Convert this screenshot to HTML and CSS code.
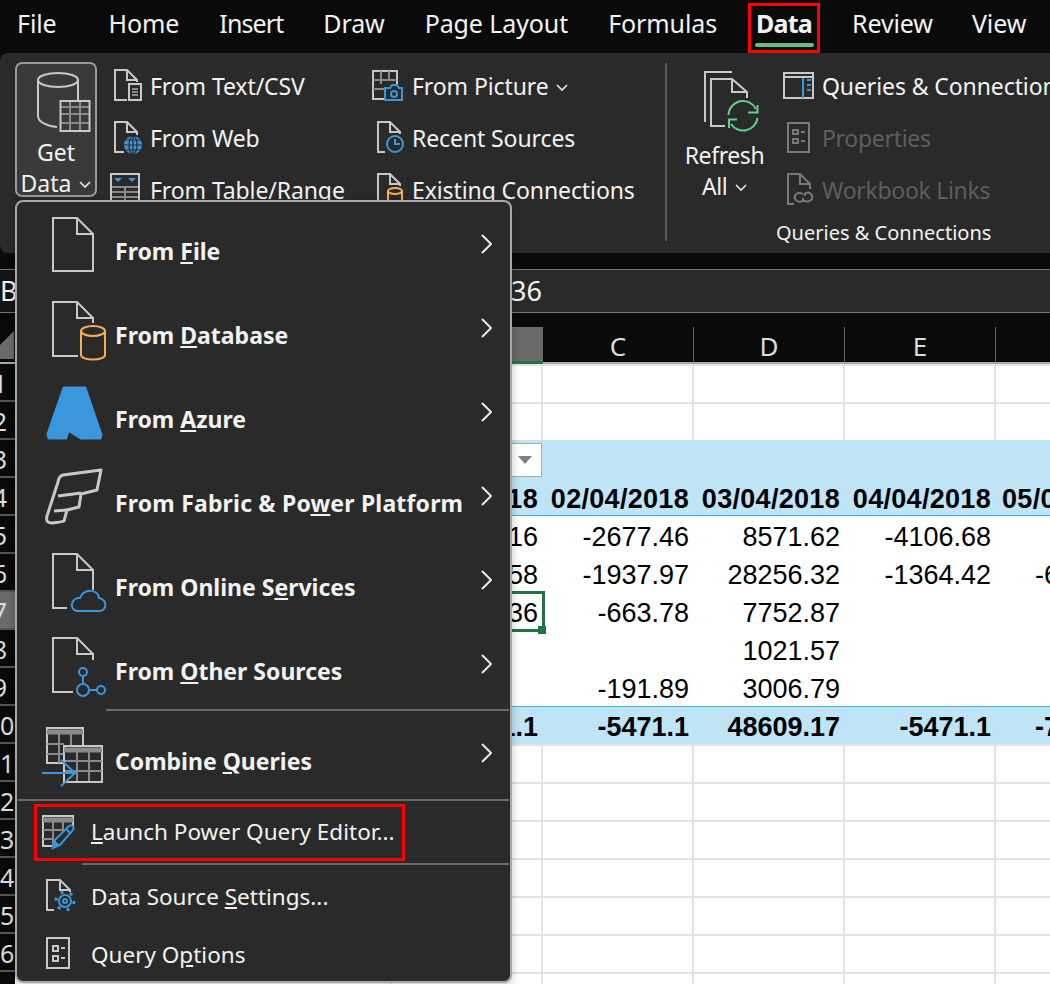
FILE: index.html
```html
<!DOCTYPE html>
<html lang="en">
<head>
    <meta charset="UTF-8">
    <meta name="viewport" content="width=device-width, initial-scale=1.0">
    <title>Excel - Get Data</title>
    <link rel="stylesheet" href="styles.css">
</head>
<body>
    <!-- tabs -->
    <nav class="tabs">
        <span class="tab tab-file">File</span>
        <span class="tab">Home</span>
        <span class="tab tab-insert">Insert</span>
        <span class="tab">Draw</span>
        <span class="tab">Page Layout</span>
        <span class="tab">Formulas</span>
        <span class="tab tab-active">Data</span>
        <span class="tab tab-review">Review</span>
        <span class="tab">View</span>
    </nav>

    <!-- ribbon -->
    <section class="ribbon">
        <div class="get-data">
            <svg class="ico" width="54" height="60" viewBox="0 0 54 60">
                <ellipse cx="21" cy="8" rx="20" ry="7"/>
                <path d="M1 8V44C1 50 10 54 20 55M41 8V28"/>
                <path class="grid" d="M24 35H52M24 42H52M24 51H52M33 30V58M43 30V58"/>
                <rect x="23.5" y="29" width="29" height="30"/>
            </svg>
            <span class="get-label">Get</span>
            <span class="get-label">Data <svg class="caret" width="12" height="8" viewBox="0 0 12 8"><path d="M1 1L6 6L11 1"/></svg></span>
        </div>

        <div class="tool-col col-one">
            <div class="tool">
                <svg class="ico" width="32" height="36" viewBox="0 0 32 36">
                    <path d="M17 31H5V1H17L27 11V13M17 1V11H27"/>
                    <rect x="19" y="15" width="12" height="16"/>
                    <path class="grid" d="M22 20H28M22 23H28M22 26H28"/>
                </svg>
                <span>From Text/CSV</span>
            </div>
            <div class="tool">
                <svg class="ico" width="32" height="36" viewBox="0 0 32 36">
                    <path d="M14 31H5V1H17L27 11V14M17 1V11H27"/>
                    <circle class="solid-blue" cx="23" cy="24" r="9"/>
                    <path class="cut" d="M14 24H32M23 15V33M16 19H30M16 29H30"/>
                    <ellipse class="cut" cx="23" cy="24" rx="4" ry="9"/>
                </svg>
                <span>From Web</span>
            </div>
            <div class="tool">
                <svg class="ico" width="32" height="36" viewBox="0 0 32 36">
                    <rect x="1" y="1" width="28" height="34"/>
                    <path class="grid" d="M2 14H28M2 19H28M2 24H28M2 29H28M15 14V34"/>
                    <path class="tri" d="M4 5H12L8 9ZM18 5H26L22 9Z"/>
                </svg>
                <span>From Table/Range</span>
            </div>
        </div>

        <div class="tool-col col-two">
            <div class="tool">
                <svg class="ico" width="32" height="36" viewBox="0 0 32 36">
                    <path d="M12 30H1V2H25V15"/>
                    <path class="grid" d="M1 11H25M1 20H12M9 2V15M17 2V11"/>
                    <path class="blue" d="M13 19H18L20 16H25L27 19H30V31H13Z"/>
                    <circle class="blue" cx="22" cy="25" r="3"/>
                </svg>
                <span>From Picture <svg class="caret" width="12" height="8" viewBox="0 0 12 8"><path d="M1 1L6 6L11 1"/></svg></span>
            </div>
            <div class="tool">
                <svg class="ico" width="32" height="36" viewBox="0 0 32 36">
                    <path d="M13 31H6V1H18L28 11V13M18 1V11H28"/>
                    <circle class="blue" cx="23" cy="23" r="8"/>
                    <path class="blue" d="M23 18V23H28"/>
                </svg>
                <span>Recent Sources</span>
            </div>
            <div class="tool">
                <svg class="ico" width="32" height="36" viewBox="0 0 32 36">
                    <path d="M13 31H6V1H18L28 11V13M18 1V11H28"/>
                    <ellipse class="orange" cx="23" cy="18" rx="7" ry="3"/>
                    <path class="orange" d="M16 18V31H30V18"/>
                </svg>
                <span>Existing Connections</span>
            </div>
        </div>

        <div class="ribbon-sep"></div>

        <div class="refresh">
            <svg class="ico" width="56" height="60" viewBox="0 0 56 60">
                <path d="M1 50V0H28"/>
                <path d="M21 54H7V7H28L43 20V26M28 7V20H43"/>
                <path class="green" d="M24.5 43A14.5 14.5 0 0 1 52 37M53.5 46A14.5 14.5 0 0 1 27 52"/>
                <path class="green" d="M44 40.5H53.5V33M25 56V47.5H33"/>
            </svg>
            <span class="refresh-label">Refresh</span>
            <span class="refresh-label">All <svg class="caret" width="12" height="8" viewBox="0 0 12 8"><path d="M1 1L6 6L11 1"/></svg></span>
        </div>

        <div class="tool-col col-three">
            <div class="tool">
                <svg class="ico" width="32" height="36" viewBox="0 0 32 36">
                    <rect x="2" y="4" width="29" height="25"/>
                    <path d="M2 8H31"/>
                    <path class="blue" d="M21 9V29M25 11H29M25 16H29M25 21H29"/>
                </svg>
                <span>Queries &amp; Connections</span>
            </div>
            <div class="tool off">
                <svg class="ico" width="32" height="36" viewBox="0 0 32 36">
                    <rect x="6" y="2" width="21" height="29"/>
                    <path d="M11 9H16V13H11ZM11 18H16V22H11ZM19 11H23M19 20H23"/>
                </svg>
                <span>Properties</span>
            </div>
            <div class="tool off">
                <svg class="ico" width="32" height="36" viewBox="0 0 32 36">
                    <path d="M12 31H6V1H18L28 11V16M18 1V11H28"/>
                    <path d="M21 21C14 18 10 24 15 28C18 30 22 28 21 25M20 27C28 31 33 25 29 21C26 18 22 20 23 23"/>
                </svg>
                <span>Workbook Links</span>
            </div>
            <div class="group-label">Queries &amp; Connections</div>
        </div>
    </section>

    <div class="ribbon-gap"></div>

    <div class="formula-bar">
        <span class="name-box">B7</span>
        <span class="formula-text">36</span>
    </div>

    <!-- sheet -->
    <main class="sheet">
        <div class="row head-row">
            <div class="corner"><div class="corner-tri"></div></div>
            <div class="col-head">A</div>
            <div class="col-head col-sel">B</div>
            <div class="col-head">C</div>
            <div class="col-head">D</div>
            <div class="col-head">E</div>
            <div class="col-head"></div>
        </div>
        <div class="row"><div class="num">1</div><div class="c"></div><div class="c"></div><div class="c"></div><div class="c"></div><div class="c"></div><div class="c"></div></div>
        <div class="row"><div class="num">2</div><div class="c"></div><div class="c"></div><div class="c"></div><div class="c"></div><div class="c"></div><div class="c"></div></div>
        <div class="row band">
            <div class="num">3</div><div class="c"></div>
            <div class="c"><div class="filter"><svg width="16" height="8" viewBox="0 0 16 8"><path d="M1 0H15L8 8Z"/></svg></div></div>
            <div class="c"></div><div class="c"></div><div class="c"></div><div class="c"></div>
        </div>
        <div class="row band band-head">
            <div class="num">4</div><div class="c"></div><div class="c">01/04/2018</div><div class="c">02/04/2018</div><div class="c">03/04/2018</div><div class="c">04/04/2018</div><div class="c left">05/0</div>
        </div>
        <div class="row plain"><div class="num">5</div><div class="c"></div><div class="c">16</div><div class="c">-2677.46</div><div class="c">8571.62</div><div class="c">-4106.68</div><div class="c"></div></div>
        <div class="row plain"><div class="num">6</div><div class="c"></div><div class="c">58</div><div class="c">-1937.97</div><div class="c">28256.32</div><div class="c">-1364.42</div><div class="c left far">-6</div></div>
        <div class="row plain"><div class="num num-sel">7</div><div class="c"></div><div class="c active-cell">36</div><div class="c">-663.78</div><div class="c">7752.87</div><div class="c"></div><div class="c"></div></div>
        <div class="row plain"><div class="num">8</div><div class="c"></div><div class="c"></div><div class="c"></div><div class="c">1021.57</div><div class="c"></div><div class="c"></div></div>
        <div class="row plain"><div class="num">9</div><div class="c"></div><div class="c"></div><div class="c">-191.89</div><div class="c">3006.79</div><div class="c"></div><div class="c"></div></div>
        <div class="row band band-total"><div class="num">10</div><div class="c"></div><div class="c">-5471.1</div><div class="c">-5471.1</div><div class="c">48609.17</div><div class="c">-5471.1</div><div class="c left far">-7</div></div>
        <div class="row"><div class="num">11</div><div class="c"></div><div class="c"></div><div class="c"></div><div class="c"></div><div class="c"></div><div class="c"></div></div>
        <div class="row"><div class="num">12</div><div class="c"></div><div class="c"></div><div class="c"></div><div class="c"></div><div class="c"></div><div class="c"></div></div>
        <div class="row"><div class="num">13</div><div class="c"></div><div class="c"></div><div class="c"></div><div class="c"></div><div class="c"></div><div class="c"></div></div>
        <div class="row"><div class="num">14</div><div class="c"></div><div class="c"></div><div class="c"></div><div class="c"></div><div class="c"></div><div class="c"></div></div>
        <div class="row"><div class="num">15</div><div class="c"></div><div class="c"></div><div class="c"></div><div class="c"></div><div class="c"></div><div class="c"></div></div>
        <div class="row"><div class="num">16</div><div class="c"></div><div class="c"></div><div class="c"></div><div class="c"></div><div class="c"></div><div class="c"></div></div>
        <div class="row"><div class="num"></div><div class="c"></div><div class="c"></div><div class="c"></div><div class="c"></div><div class="c"></div><div class="c"></div></div>
    </main>

    <!-- get data menu, sits over the ribbon and the sheet -->
    <div class="menu">
        <div class="item">
            <svg class="ico" width="66" height="84" viewBox="0 0 66 84">
                <path d="M11 8H35L51 24V61H11ZM35 8V24H51"/>
            </svg>
            <span class="item-text">From <u>F</u>ile</span>
            <svg class="chev" width="12" height="20" viewBox="0 0 12 20"><path d="M2 1L11 10L2 19"/></svg>
        </div>
        <div class="item">
            <svg class="ico" width="66" height="84" viewBox="0 0 66 84">
                <path d="M36 62H11V8H35L51 24V29M35 8V24H51"/>
                <ellipse class="orange" cx="51" cy="37" rx="12" ry="5"/>
                <path class="orange" d="M39 37V61C39 67 63 67 63 61V37"/>
            </svg>
            <span class="item-text">From <u>D</u>atabase</span>
            <svg class="chev" width="12" height="20" viewBox="0 0 12 20"><path d="M2 1L11 10L2 19"/></svg>
        </div>
        <div class="item">
            <svg class="ico" width="66" height="84" viewBox="0 0 66 84">
                <path class="azure" d="M22 10H43L59 57L58 60H39L26 52L24 60H7L6 56Z"/>
            </svg>
            <span class="item-text">From <u>A</u>zure</span>
            <svg class="chev" width="12" height="20" viewBox="0 0 12 20"><path d="M2 1L11 10L2 19"/></svg>
        </div>
        <div class="item">
            <svg class="ico fabric" width="66" height="84" viewBox="0 0 66 84">
                <path d="M21 13L59 8L55 28L39 32L37 45L25 48L22 59Q20 60 10 61Q3 61 5 54L16 20Q17 14 21 13Z"/>
                <path d="M16 34L39 31M12 49L25 48"/>
            </svg>
            <span class="item-text item-long">From Fabric &amp; Po<u>w</u>er Platform</span>
            <svg class="chev" width="12" height="20" viewBox="0 0 12 20"><path d="M2 1L11 10L2 19"/></svg>
        </div>
        <div class="item">
            <svg class="ico" width="66" height="84" viewBox="0 0 66 84">
                <path d="M25 62H11V8H35L51 24V44M35 8V24H51"/>
                <path class="blue" d="M35 65H57C65 65 66 54 57 52C56 43 42 42 38 52C30 51 26 63 35 65Z"/>
            </svg>
            <span class="item-text">From Online S<u>e</u>rvices</span>
            <svg class="chev" width="12" height="20" viewBox="0 0 12 20"><path d="M2 1L11 10L2 19"/></svg>
        </div>
        <div class="item">
            <svg class="ico" width="66" height="84" viewBox="0 0 66 84">
                <path d="M31 62H11V8H35L51 24V30M35 8V24H51"/>
                <circle class="blue" cx="41" cy="42" r="4"/>
                <circle class="blue" cx="41" cy="60" r="6"/>
                <circle class="blue" cx="59" cy="60" r="4"/>
                <path class="blue" d="M41 46V54M47 60H55"/>
            </svg>
            <span class="item-text">From <u>O</u>ther Sources</span>
            <svg class="chev" width="12" height="20" viewBox="0 0 12 20"><path d="M2 1L11 10L2 19"/></svg>
        </div>
        <div class="menu-sep sep-wide"></div>
        <div class="item item-combine">
            <svg class="ico" width="66" height="84" viewBox="0 0 66 84">
                <path d="M22 44H5V9H41V27"/>
                <path class="thick" d="M5 13H41"/>
                <path class="grid" d="M5 25H22M5 35H22M17 15V44M29 15V27"/>
                <rect class="cover" x="22" y="27" width="38" height="36"/>
                <path class="thick" d="M22 31H60"/>
                <path class="grid" d="M23 42H60M23 52H60M35 33V62M47 33V62"/>
                <path class="blue" d="M0 54H33M19 41L33 54L19 67"/>
            </svg>
            <span class="item-text">Combine <u>Q</u>ueries</span>
            <svg class="chev" width="12" height="20" viewBox="0 0 12 20"><path d="M2 1L11 10L2 19"/></svg>
        </div>
        <div class="menu-sep sep-full"></div>
        <div class="small launch">
            <svg class="ico" width="40" height="52" viewBox="0 0 40 52">
                <path d="M10 39H1V9H31V20"/>
                <path class="thick" d="M1 13H31"/>
                <path class="grid" d="M1 23H21M1 32H12M11 15V39M21 15V24"/>
                <path class="blue" d="M11 41L13 33L27 19C30 17 33 20 31 23L18 38ZM24 22L29 27"/>
                <path class="tri" d="M11 41L13 34L18 38Z"/>
            </svg>
            <span class="small-text"><u>L</u>aunch Power Query Editor...</span>
        </div>
        <div class="menu-sep sep-short"></div>
        <div class="small">
            <svg class="ico" width="40" height="58" viewBox="0 0 40 58">
                <path d="M12 42H5V12H18L28 22V24M18 12V22H28"/>
                <circle class="blue" cx="23" cy="33" r="6"/>
                <circle class="gear" cx="23" cy="33" r="9"/>
                <circle class="blue" cx="23" cy="33" r="2"/>
            </svg>
            <span class="small-text">Data Source <u>S</u>ettings...</span>
        </div>
        <div class="small">
            <svg class="ico" width="40" height="58" viewBox="0 0 40 58">
                <rect x="5" y="12" width="22" height="30"/>
                <path d="M11 20H16V25H11ZM11 30H16V35H11ZM19 22H23M19 32H23"/>
            </svg>
            <span class="small-text">Query O<u>p</u>tions</span>
        </div>
    </div>
</body>
</html>
```

FILE: styles.css
```css
body {
    margin: 0;
    width: 1050px;
    height: 984px;
    overflow: hidden;
    position: relative;
    background-color: #0a0a0a;
    color: #f2f2f2;
    font-family: "Noto Sans", sans-serif;
    white-space: nowrap;
}

/* icons */
.ico {
    display: block;
    flex: none;
    fill: none;
    stroke: #c8c8c8;
    stroke-width: 2;
}

.ico .grid {
    stroke: #8a8a8a;
}

.ico .thick {
    stroke: #8a8a8a;
    stroke-width: 5;
}

.ico .blue {
    stroke: #3a96dd;
}

.ico .orange {
    stroke: #f5b056;
}

.ico .green {
    stroke: #5fd38a;
}

.ico .solid-blue {
    fill: #3a96dd;
    stroke: none;
}

.ico .cut {
    stroke: #2a2a2a;
    stroke-width: 1.2;
}

.ico .tri {
    fill: #3a96dd;
    stroke: none;
}

.ico .azure {
    fill: #3a96dd;
    stroke: #3a96dd;
    stroke-width: 3;
    stroke-linejoin: round;
}

.ico .gear {
    stroke: #3a96dd;
    stroke-width: 3;
    stroke-dasharray: 3 6.42;
}

.ico .cover {
    fill: #2a2a2a;
}

.fabric {
    stroke-width: 3;
    stroke-linejoin: round;
}

.caret {
    fill: none;
    stroke: #e8e8e8;
    stroke-width: 1.6;
    margin-left: 2px;
    vertical-align: 3px;
}

/* tabs */
.tabs {
    display: flex;
    height: 53px;
    padding-left: 17px;
    gap: 40px;
    font-size: 25px;
    letter-spacing: -0.1px;
    line-height: 46px;
}

.tab-file {
    margin-right: 12px;
}

.tab-insert {
    letter-spacing: -0.9px;
}

.tab-review {
    margin-right: -1px;
}

.tab-active {
    position: relative;
    box-sizing: border-box;
    height: 50px;
    margin: 3px -8px 0 -9px;
    padding: 0 5px;
    border: 3px solid #f00;
    font-weight: 700;
    letter-spacing: -0.8px;
    line-height: 34px;
}

.tab-active::after {
    content: "";
    position: absolute;
    left: 4px;
    right: 3px;
    top: 37px;
    height: 4px;
    border-radius: 2px;
    background-color: #5fbf85;
}

/* ribbon */
.ribbon {
    display: flex;
    box-sizing: border-box;
    height: 200px;
    padding-left: 15px;
    background-color: #2a2a2a;
    border-radius: 8px 0 0 8px;
    font-size: 23px;
}

.get-data {
    display: flex;
    flex: none;
    flex-direction: column;
    align-items: center;
    box-sizing: border-box;
    width: 82px;
    height: 135px;
    margin-top: 9px;
    padding-top: 8px;
    background-color: #3a3a3a;
    border: 2px solid #9a9a9a;
    border-radius: 7px;
}

.get-data .ico {
    margin: 0 0 5px 16px;
}

.get-label {
    line-height: 31px;
}

.tool-col {
    flex: none;
    padding-top: 8px;
}

.col-one {
    width: 262px;
    margin-left: 13px;
}

.col-two {
    width: 293px;
}

.col-three {
    position: relative;
    width: 300px;
}

.tool {
    display: flex;
    align-items: center;
    gap: 8px;
    height: 52px;
    letter-spacing: -0.1px;
}

.tool span {
    margin-top: -2px;
}

.off {
    color: #5e5e5e;
    letter-spacing: -0.3px;
}

.off .ico {
    stroke: #7a7a7a;
}

.ribbon-sep {
    flex: none;
    width: 2px;
    height: 178px;
    margin-top: 10px;
    background-color: #5a5a5a;
}

.refresh {
    display: flex;
    flex: none;
    flex-direction: column;
    align-items: center;
    box-sizing: border-box;
    width: 115px;
    padding-top: 19px;
}

.refresh .ico {
    overflow: visible;
    margin: 0 0 8px 14px;
}

.refresh-label {
    letter-spacing: -0.4px;
    line-height: 31px;
}

.group-label {
    position: absolute;
    left: -6px;
    top: 163px;
    font-size: 20px;
    line-height: 34px;
}

.ribbon-gap {
    height: 16px;
}

/* formula bar */
.formula-bar {
    display: flex;
    box-sizing: border-box;
    height: 44px;
    background-color: #2a2a2a;
    border-top: 1px solid #777;
    border-bottom: 1px solid #777;
    font-size: 27px;
    line-height: 42px;
}

.name-box {
    width: 15px;
    flex: none;
    background-color: #141414;
}

.formula-text {
    padding-left: 496px;
}

/* sheet */
.sheet {
    background-color: #fff;
    color: #000;
    font-family: "Liberation Sans", sans-serif;
    font-size: 27px;
}

.row {
    display: grid;
    grid-template-columns: 30px 377px 151px 151px 151px 151px 151px;
    grid-template-rows: 38px;
    height: 38px;
    margin-left: -15px;
    line-height: 43px;
    text-align: right;
}

.c {
    position: relative;
    box-sizing: border-box;
    padding-right: 5px;
    border-right: 2px solid #e3e3e3;
    border-top: 2px solid #e3e3e3;
}

.num {
    box-sizing: border-box;
    background-color: #0a0a0a;
    color: #dcdcdc;
    border-bottom: 2px solid #555;
    font-family: "Noto Sans", sans-serif;
    font-size: 25px;
    font-weight: 400;
    letter-spacing: 0;
    line-height: 38px;
    text-align: center;
}

.num-sel {
    background-color: #6b6b6b;
}

.plain .c,
.band .c {
    border: 0;
}

.band .c {
    background-color: #bfe4f5;
}

.band-head,
.band-total {
    font-weight: 700;
}

.band-head {
    letter-spacing: 0.3px;
}

.band-head .c {
    border-bottom: 1px solid #3ab0e8;
}

.band-total .c {
    border-top: 1px solid #3ab0e8;
    line-height: 40px;
}

.left {
    padding: 0 0 0 6px;
    text-align: left;
}

.far {
    padding-left: 39px;
}

.head-row {
    grid-template-rows: 51px;
    height: 51px;
    background-color: #0a0a0a;
    color: #dcdcdc;
    font-family: "Noto Sans", sans-serif;
    font-size: 26px;
    text-align: center;
}

.col-head {
    box-sizing: border-box;
    margin-top: 14px;
    padding-top: 4px;
    border-right: 1px solid #666;
    border-bottom: 2px solid #aaa;
    line-height: 31px;
}

.col-sel {
    background-color: #6b6b6b;
    border-right-color: #6b6b6b;
    border-bottom: 3px solid #217346;
    line-height: 30px;
}

.corner {
    position: relative;
    border-bottom: 2px solid #aaa;
}

.corner-tri {
    position: absolute;
    right: 1px;
    bottom: 3px;
    width: 28px;
    height: 28px;
    background-color: #6b6b6b;
    clip-path: polygon(100% 0, 100% 100%, 0 100%);
}

.filter {
    position: absolute;
    right: 1px;
    top: 3px;
    display: flex;
    align-items: center;
    justify-content: center;
    box-sizing: border-box;
    width: 34px;
    height: 34px;
    background-color: #fff;
    border: 1px solid #aaa;
}

.filter path {
    fill: #808080;
}

.active-cell::after {
    content: "";
    position: absolute;
    left: 0;
    right: -2px;
    top: -1px;
    bottom: -2px;
    border: 3px solid #217346;
}

.active-cell::before {
    content: "";
    position: absolute;
    right: -3px;
    bottom: -4px;
    z-index: 1;
    width: 8px;
    height: 8px;
    background-color: #217346;
}

/* get data menu */
.menu {
    position: absolute;
    left: 15px;
    top: 200px;
    box-sizing: border-box;
    width: 497px;
    height: 783px;
    padding-top: 8px;
    background-color: #2a2a2a;
    border: 2px solid #a8a8a8;
    border-radius: 8px;
    box-shadow: 0 2px 8px rgba(0, 0, 0, 0.25);
}

.item {
    display: flex;
    align-items: center;
    gap: 7px;
    height: 84px;
    padding: 0 18px 0 25px;
    font-size: 23px;
    font-weight: 700;
}

.item-text {
    flex: 1;
    margin-bottom: 2px;
}

.item-long {
    letter-spacing: 0.18px;
}

.item-combine {
    margin: 8px 0 -4px;
}

.item-combine .item-text {
    margin-bottom: 0;
}

.chev {
    flex: none;
    fill: none;
    stroke: #e8e8e8;
    stroke-width: 2;
    margin-bottom: 16px;
}

.menu-sep {
    position: relative;
    height: 2px;
    background-color: #6a6a6a;
}

.sep-wide {
    margin: -5px 1px 0 89px;
}

.sep-full {
    margin: 0 1px 3px 1px;
}

.sep-short {
    margin: 2px 1px 3px 65px;
}

.small {
    display: flex;
    align-items: center;
    gap: 9px;
    box-sizing: border-box;
    height: 58px;
    padding-left: 25px;
    font-size: 22.5px;
}

.small-text {
    margin-bottom: 2px;
}

.launch {
    width: 371px;
    height: 57px;
    margin-left: 17px;
    padding-left: 5px;
    border: 3px solid #f00;
}

.launch .small-text {
    margin-bottom: 3px;
}
```
